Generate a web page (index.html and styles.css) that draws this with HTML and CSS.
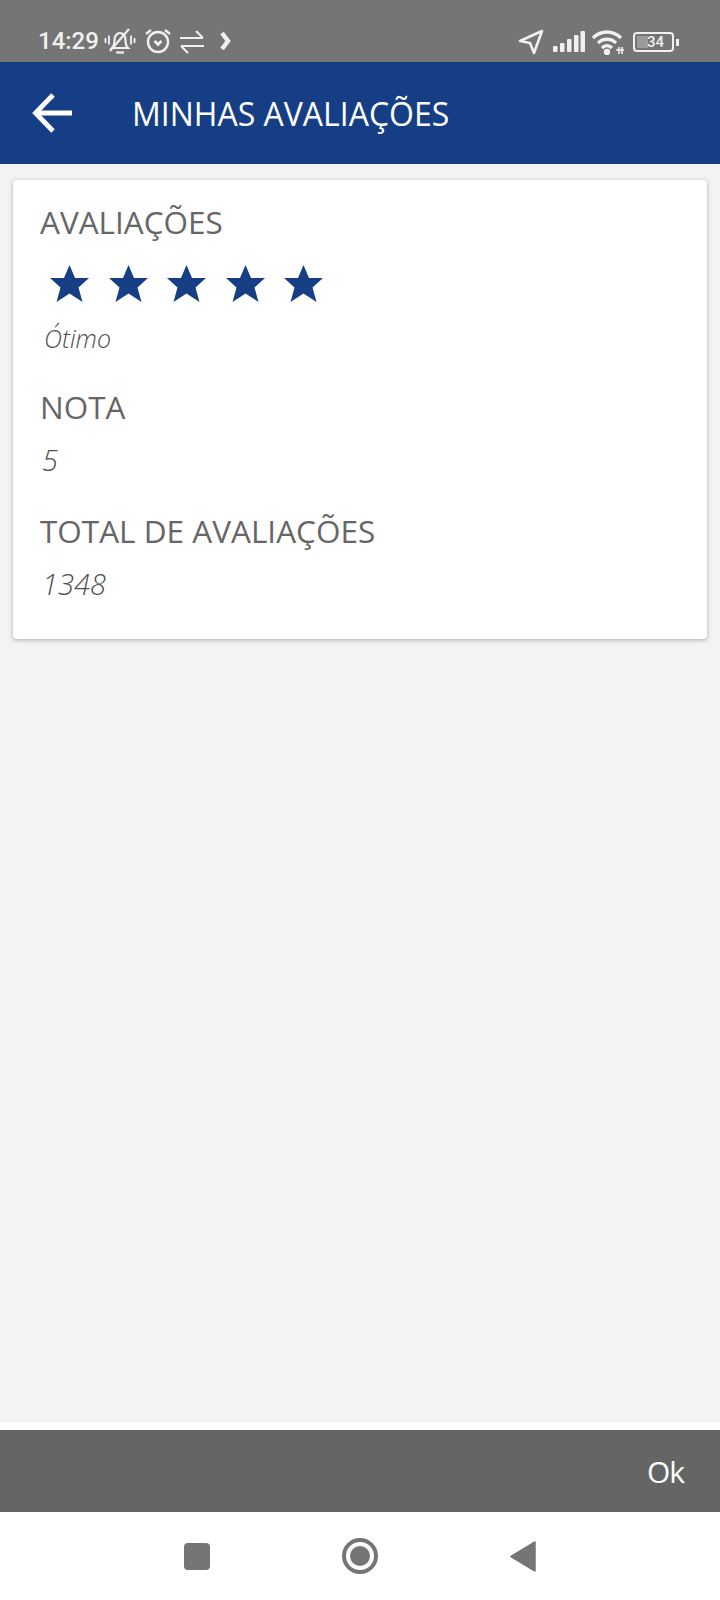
FILE: index.html
```html
<!DOCTYPE html>
<html>
  <head>
    <meta name='viewport' content='width=device-width, initial-scale=1'>
    <title>Minhas Avaliações</title>
    <link rel="stylesheet" href="styles.css">
  </head>
<body>

<div class='status'>
  <div class='status_left'>
    <span class='time'>14:29</span>
    <svg class='ic_bell' width='32' height='28' viewBox='0 0 32 28' fill='none' stroke='#f0f0f0' stroke-width='2.2'>
      <path d='M8 21c2-2 2.500-4 2.500-8 0-4 2.500-7 5.500-7s5.500 3 5.500 7c0 4 .5 6 2.500 8z'/>
      <path d='M12 25.500h8'/>
      <path d='M6 24L25 2'/>
      <path d='M1.500 11v5M5 8.500v9M27 8.500v9M30.500 11v5' stroke-width='1.8'/>
    </svg>
    <svg class='ic_alarm' width='28' height='28' viewBox='0 0 28 28' fill='none' stroke='#f0f0f0' stroke-width='2.4'>
      <circle cx='14' cy='15' r='10'/>
      <path d='M2 7l5-4M26 7l-5-4'/>
      <path d='M10.500 14l3.500 3.500 3.500-3.500' stroke-width='2.800'/>
    </svg>
    <svg class='ic_swap' width='26' height='26' viewBox='0 0 26 26' fill='none' stroke='#f0f0f0' stroke-width='2'>
      <path d='M1 10h23M17 3l7 7'/>
      <path d='M25 18H2M9 25l-7-7'/>
    </svg>
    <svg class='ic_chevron' width='12' height='22' viewBox='0 0 12 22' fill='none' stroke='#f0f0f0' stroke-width='4.400'>
      <path d='M3 3l6 8-6 8'/>
    </svg>
  </div>
  <div class='status_right'>
    <svg width='26' height='26' viewBox='0 0 26 26' fill='none' stroke='#f0f0f0' stroke-width='2.600' stroke-linejoin='round'>
      <path d='M24 2L2 12l10 2 4 10z'/>
    </svg>
    <svg width='32' height='22' viewBox='0 0 32 22' fill='#f0f0f0'>
      <rect x='0' y='15' width='4.500' height='6' rx='1'/>
      <rect x='7' y='12' width='4.500' height='9' rx='1'/>
      <rect x='14' y='8' width='4.500' height='13' rx='1'/>
      <rect x='21' y='4' width='4.500' height='17' rx='1'/>
      <rect x='27.500' y='0' width='4.500' height='21' rx='1'/>
    </svg>
    <svg class='ic_wifi' width='32' height='26' viewBox='0 0 32 26' fill='none' stroke='#f0f0f0' stroke-width='3.400'>
      <path d='M1 9c8-8 20-8 28 0'/>
      <path d='M6 14c5-5 13-5 18 0'/>
      <path d='M10 19c3-3 7-3 10 0'/>
      <circle cx='15' cy='23' r='1.500' fill='#f0f0f0'/>
      <path d='M24 21h8M27 18v7M30 18v7' stroke-width='1.600'/>
    </svg>
    <div class='battery'>
      <div class='battery_body'><span class='battery_fill'></span><span class='battery_num'>34</span></div>
      <span class='battery_tip'></span>
    </div>
  </div>
</div>

<div class='header'>
  <svg class='back' width='40' height='40' viewBox='0 0 40 40' fill='none' stroke='white' stroke-width='4.800'>
    <path d='M3 20h37'/>
    <path d='M21 2L3.500 20 21 38'/>
  </svg>
  <h1 class='title'>MINHAS AVALIAÇÕES</h1>
</div>

<div class='content'>
  <div class='card'>
    <h3 class='label'>AVALIAÇÕES</h3>
    <div class='stars'>
      <svg width='39' height='37' viewBox='0 0 39 37'><path class='star' d='M19.500 0l5.500 13h14l-10.500 9.500 4 14.500-13-8.500-13 8.500 4-14.500L0 13h14z'/></svg>
      <svg width='39' height='37' viewBox='0 0 39 37'><path class='star' d='M19.500 0l5.500 13h14l-10.500 9.500 4 14.500-13-8.500-13 8.500 4-14.500L0 13h14z'/></svg>
      <svg width='39' height='37' viewBox='0 0 39 37'><path class='star' d='M19.500 0l5.500 13h14l-10.500 9.500 4 14.500-13-8.500-13 8.500 4-14.500L0 13h14z'/></svg>
      <svg width='39' height='37' viewBox='0 0 39 37'><path class='star' d='M19.500 0l5.500 13h14l-10.500 9.500 4 14.500-13-8.500-13 8.500 4-14.500L0 13h14z'/></svg>
      <svg width='39' height='37' viewBox='0 0 39 37'><path class='star' d='M19.500 0l5.500 13h14l-10.500 9.500 4 14.500-13-8.500-13 8.500 4-14.500L0 13h14z'/></svg>
    </div>
    <p class='value small'>Ótimo</p>
    <h3 class='label'>NOTA</h3>
    <p class='value'>5</p>
    <h3 class='label'>TOTAL DE AVALIAÇÕES</h3>
    <p class='value'>1348</p>
  </div>
</div>

<div class='strip'></div>
<div class='okbar'><span class='ok'>Ok</span></div>

<div class='nav'>
  <span class='nav_square'></span>
  <span class='nav_circle'><span class='nav_dot'></span></span>
  <svg width='26' height='31' viewBox='0 0 26 31'><path d='M25 1v29L1 15.500z' fill='#757575' stroke='#757575' stroke-width='1.500' stroke-linejoin='round'/></svg>
</div>

</body>
</html>
```
FILE: styles.css
```css
* {box-sizing: border-box;}

body {margin: 0;height: 1600px;display: flex;flex-direction: column;background-color: #f3f3f3;font-family: "Open Sans", sans-serif;}

/* status bar */
.status {height: 62px;flex: none;background-color: #757575;display: flex;justify-content: space-between;align-items: flex-end;padding: 0 41px 7px 38px;color: #f0f0f0;}
.status_left, .status_right {display: flex;align-items: center;}
.time {font-family: Roboto, sans-serif;font-size: 24px;font-weight: 500;line-height: 28px;margin-right: 5px;}
.ic_alarm {margin-left: 8px;}
.ic_swap {margin-left: 7px;}
.ic_chevron {margin-left: 14px;}
.status_right {gap: 9px;}
.ic_wifi {margin-left: -2px;}
.battery {display: flex;align-items: center;gap: 2px;}
.battery_body {position: relative;width: 41px;height: 20px;border: 2px solid #f0f0f0;border-radius: 4px;display: flex;align-items: center;justify-content: center;}
.battery_fill {position: absolute;left: 2px;top: 2px;bottom: 2px;width: 11px;background-color: #9a9a9a;}
.battery_num {position: relative;left: 2px;font-family: Roboto, sans-serif;font-size: 15px;font-weight: 500;line-height: 15px;}
.battery_tip {width: 3px;height: 7px;background-color: #f0f0f0;}

/* header */
.header {height: 102px;flex: none;background-color: #163e85;display: flex;align-items: center;padding-left: 32px;}
.title {margin: 0 0 0 60px;font-size: 32px;font-weight: 400;color: white;}

/* card */
.content {flex: 1;padding: 16px 13px 0 13px;}
.card {background-color: white;border-radius: 4px;box-shadow: 0 1px 4px rgba(0,0,0,0.3);height: 459px;padding: 20px 27px;color: #666;}
.label {margin: 0;font-size: 31.5px;font-weight: 400;line-height: 44px;}
.stars {display: flex;gap: 19.6px;margin: 21px 0 0 10px;}
.star {fill: #163e85;}
.value {margin: 13px 0 31px 2px;font-size: 29px;font-style: italic;font-weight: 300;line-height: 36px;color: #4f4f4f;}
.value.small {font-size: 25px;margin: 18px 0 29px 4px;}

/* bottom */
.strip {height: 8px;flex: none;background-color: white;}
.okbar {height: 82px;flex: none;background-color: #656565;display: flex;justify-content: flex-end;align-items: center;padding-right: 36px;}
.ok {color: white;font-size: 30px;font-weight: 500;letter-spacing: -1px;}
.nav {height: 88px;flex: none;background-color: white;display: flex;align-items: center;padding-left: 184px;}
.nav_square {width: 26px;height: 27px;border-radius: 4px;background-color: #757575;}
.nav_circle {width: 36px;height: 36px;margin-left: 132px;border: 4px solid #757575;border-radius: 50%;display: flex;align-items: center;justify-content: center;}
.nav_dot {width: 20px;height: 20px;border-radius: 50%;background-color: #757575;}
.nav svg {margin-left: 132px;}
```
